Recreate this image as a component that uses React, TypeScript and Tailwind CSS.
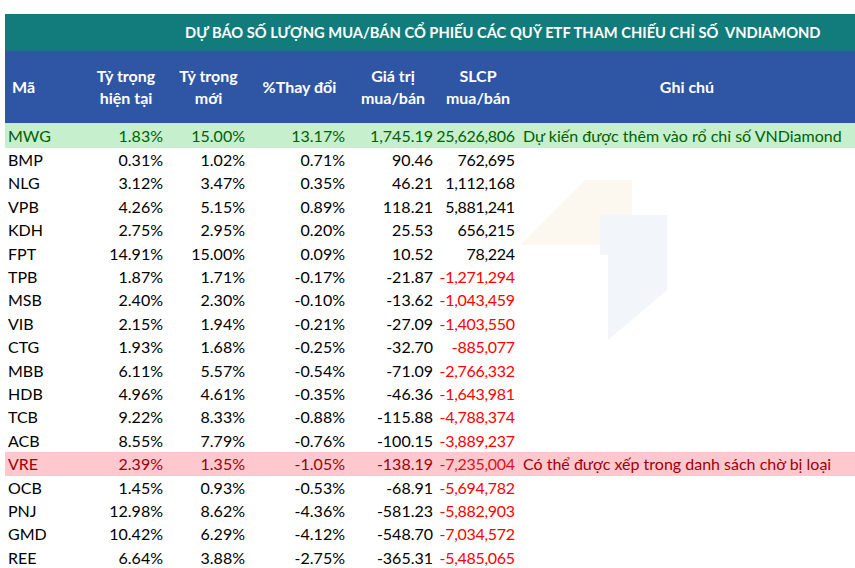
import React from "react";

type Row = {
  code: string;
  cur: string;
  next: string;
  change: string;
  value: string;
  shares: string;
  note?: string;
  tone?: "good" | "bad";
};

const rows: Row[] = [
  { code: "MWG", cur: "1.83%", next: "15.00%", change: "13.17%", value: "1,745.19", shares: "25,626,806", note: "Dự kiến được thêm vào rổ chỉ số VNDiamond", tone: "good" },
  { code: "BMP", cur: "0.31%", next: "1.02%", change: "0.71%", value: "90.46", shares: "762,695" },
  { code: "NLG", cur: "3.12%", next: "3.47%", change: "0.35%", value: "46.21", shares: "1,112,168" },
  { code: "VPB", cur: "4.26%", next: "5.15%", change: "0.89%", value: "118.21", shares: "5,881,241" },
  { code: "KDH", cur: "2.75%", next: "2.95%", change: "0.20%", value: "25.53", shares: "656,215" },
  { code: "FPT", cur: "14.91%", next: "15.00%", change: "0.09%", value: "10.52", shares: "78,224" },
  { code: "TPB", cur: "1.87%", next: "1.71%", change: "-0.17%", value: "-21.87", shares: "-1,271,294" },
  { code: "MSB", cur: "2.40%", next: "2.30%", change: "-0.10%", value: "-13.62", shares: "-1,043,459" },
  { code: "VIB", cur: "2.15%", next: "1.94%", change: "-0.21%", value: "-27.09", shares: "-1,403,550" },
  { code: "CTG", cur: "1.93%", next: "1.68%", change: "-0.25%", value: "-32.70", shares: "-885,077" },
  { code: "MBB", cur: "6.11%", next: "5.57%", change: "-0.54%", value: "-71.09", shares: "-2,766,332" },
  { code: "HDB", cur: "4.96%", next: "4.61%", change: "-0.35%", value: "-46.36", shares: "-1,643,981" },
  { code: "TCB", cur: "9.22%", next: "8.33%", change: "-0.88%", value: "-115.88", shares: "-4,788,374" },
  { code: "ACB", cur: "8.55%", next: "7.79%", change: "-0.76%", value: "-100.15", shares: "-3,889,237" },
  { code: "VRE", cur: "2.39%", next: "1.35%", change: "-1.05%", value: "-138.19", shares: "-7,235,004", note: "Có thể được xếp trong danh sách chờ bị loại", tone: "bad" },
  { code: "OCB", cur: "1.45%", next: "0.93%", change: "-0.53%", value: "-68.91", shares: "-5,694,782" },
  { code: "PNJ", cur: "12.98%", next: "8.62%", change: "-4.36%", value: "-581.23", shares: "-5,882,903" },
  { code: "GMD", cur: "10.42%", next: "6.29%", change: "-4.12%", value: "-548.70", shares: "-7,034,572" },
  { code: "REE", cur: "6.64%", next: "3.88%", change: "-2.75%", value: "-365.31", shares: "-5,485,065" },
];

const cols = "grid grid-cols-[80px_82px_83px_99px_88px_82px_336px]";

function Watermark() {
  return (
    <svg
      className="absolute left-0 top-0 pointer-events-none"
      width="855"
      height="568"
      viewBox="0 0 855 568"
    >
      {/* faint logo marks behind the table */}
      <path d="M520 245 L585 180 L632 180 L632 245 Z" fill="#fdf8ef" />
      <path d="M600 215 L667 215 L667 290 L608 340 L608 255 L600 255 Z" fill="#f2f5fa" />
    </svg>
  );
}

export default function App() {
  return (
    <div className="relative w-[855px] h-[568px] overflow-hidden bg-white pt-[14px] pl-[5px] font-['Lato',sans-serif] text-[16px] text-black">
      <Watermark />
      <div className="relative">
        <div className="h-[37px] bg-[#127c7c] flex items-center pl-[180px] text-[14.7px] font-bold text-white whitespace-pre">
          DỰ BÁO SỐ LƯỢNG MUA/BÁN CỔ PHIẾU CÁC QUỸ ETF THAM CHIẾU CHỈ SỐ  VNDIAMOND
        </div>
        <div className={`${cols} h-[72px] bg-[#2f55a5] text-white font-bold text-[16px] leading-[22px]`}>
          <div className="flex items-center pl-[7px]">Mã</div>
          <div className="flex items-center justify-center text-center">Tỷ trọng<br />hiện tại</div>
          <div className="flex items-center justify-center text-center">Tỷ trọng<br />mới</div>
          <div className="flex items-center justify-center text-center">%Thay đổi</div>
          <div className="flex items-center justify-center text-center">Giá trị<br />mua/bán</div>
          <div className="flex items-center justify-center text-center">SLCP<br />mua/bán</div>
          <div className="flex items-center justify-center text-center">Ghi chú</div>
        </div>
        {rows.map((r) => {
          const rowCls =
            r.tone === "good"
              ? "bg-[#c6efce] text-[#006100] h-[25px]"
              : r.tone === "bad"
              ? "bg-[#ffc7ce] text-[#9c0006] h-[23.5px]"
              : "h-[23.4px]";
          const neg = r.shares.startsWith("-");
          return (
            <div key={r.code} className={`${cols} items-center whitespace-nowrap ${rowCls}`}>
              <div className="pl-[3px]">{r.code}</div>
              <div className="flex justify-end pr-[4px]">{r.cur}</div>
              <div className="flex justify-end pr-[5px]">{r.next}</div>
              <div className="flex justify-end pr-[4px]">{r.change}</div>
              <div className="flex justify-end pr-[4px]">{r.value}</div>
              <div className={`flex justify-end pr-[4px] ${neg && !r.tone ? "text-[#ff0000]" : ""} ${neg && r.tone ? "text-[#e0101a]" : ""}`}>
                <span className="tracking-[-0.3px] mr-[0.3px]">{r.shares}</span>
              </div>
              <div className="pl-[4px]">{r.note}</div>
            </div>
          );
        })}
      </div>
    </div>
  );
}
